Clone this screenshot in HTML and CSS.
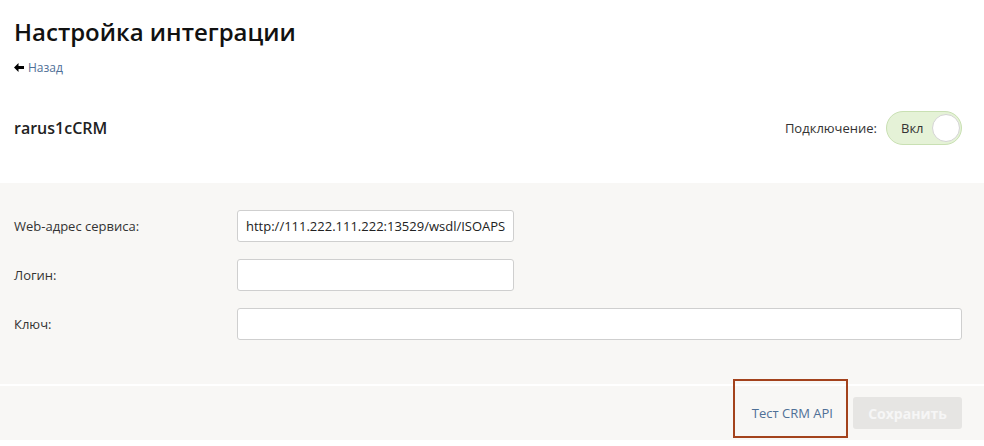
FILE: index.html
```html
<!DOCTYPE html>
<html lang="ru">
<head>
    <meta charset="UTF-8">
    <meta name="viewport" content="width=device-width, initial-scale=1.0">
    <title>Настройка интеграции</title>
    <link rel="stylesheet" href="styles.css">
</head>
<body>
    <div class="page-head">
        <h1>Настройка интеграции</h1>
        <a class="back" href="#">
            <svg class="back-arrow" width="10" height="9" viewBox="0 0 10 9"><path d="M0 4.5L4.5 0V3H10V6H4.5V9Z" fill="#000"/></svg>
            Назад
        </a>
    </div>

    <div class="integration">
        <div class="integration-name">rarus1cCRM</div>
        <div class="connection">
            <span>Подключение:</span>
            <div class="toggle">
                <span class="toggle-label">Вкл</span>
                <span class="toggle-knob"></span>
            </div>
        </div>
    </div>

    <div class="settings">
        <div class="fields">
            <div class="field">
                <label for="url">Web-адрес сервиса:</label>
                <input type="text" id="url" class="short" value="http://111.222.111.222:13529/wsdl/ISOAPService">
            </div>
            <div class="field">
                <label for="login">Логин:</label>
                <input type="text" id="login" class="short">
            </div>
            <div class="field">
                <label for="key">Ключ:</label>
                <input type="text" id="key">
            </div>
        </div>

        <div class="actions">
            <button class="link-btn">Тест CRM API</button>
            <button class="save-btn" disabled>Сохранить</button>
            <div class="highlight"></div>
        </div>
    </div>
</body>
</html>
```

FILE: styles.css
```css
body {
    margin: 0;
    font-family: "Open Sans", Arial, sans-serif;
    color: #222;
    background-color: white;
}
.page-head {
    padding: 14px 14px 0;
}
h1 {
    margin: 0;
    font-size: 24px;
    font-weight: 600;
    line-height: 36px;
    color: #111;
}
.back {
    display: inline-flex;
    align-items: center;
    margin-top: 9px;
    font-size: 12px;
    color: #4f7097;
    text-decoration: none;
}
.back-arrow {
    margin-right: 4px;
}
.integration {
    display: flex;
    align-items: center;
    justify-content: space-between;
    height: 34px;
    padding: 0 22px 0 14px;
    margin-top: 34px;
    margin-bottom: 38px;
}
.integration-name {
    font-size: 16px;
    font-weight: 600;
    color: #222;
}
.connection {
    display: flex;
    align-items: center;
    gap: 9px;
    font-size: 13px;
    color: #333;
}
.toggle {
    display: flex;
    align-items: center;
    justify-content: space-between;
    box-sizing: border-box;
    width: 76px;
    height: 34px;
    padding: 0 1px 0 14px;
    border: 1px solid #c9e0b3;
    border-radius: 17px;
    background-color: #e5f2d7;
}
.toggle-label {
    font-size: 13px;
    color: #333;
}
.toggle-knob {
    width: 28px;
    height: 28px;
    box-sizing: border-box;
    border: 1px solid #d4d4d4;
    border-radius: 50%;
    background-color: white;
}
.settings {
    background-color: #f8f7f5;
}
.fields {
    padding: 27px 22px 27px 14px;
    border-bottom: 2px solid white;
}
.field {
    display: flex;
    align-items: center;
    margin-bottom: 17px;
}
label {
    width: 223px;
    flex-shrink: 0;
    font-size: 13px;
    color: #333;
}
input {
    box-sizing: border-box;
    flex: 1;
    height: 32px;
    padding: 0 8px;
    border: 1px solid #cfcfcf;
    border-radius: 3px;
    background-color: white;
    font-family: "Open Sans", Arial, sans-serif;
    font-size: 13px;
    color: #222;
}
input.short {
    flex: none;
    width: 277px;
}
.actions {
    position: relative;
    display: flex;
    justify-content: flex-end;
    align-items: center;
    gap: 5px;
    padding: 11px 22px 11px 0;
}
.link-btn {
    border: none;
    background: none;
    padding: 0 15px 0 19px;
    height: 32px;
    font-family: "Open Sans", Arial, sans-serif;
    font-size: 13px;
    color: #4f7097;
    cursor: pointer;
}
.save-btn {
    width: 109px;
    height: 32px;
    border: none;
    border-radius: 3px;
    background-color: #e6e5e3;
    font-family: "Open Sans", Arial, sans-serif;
    font-size: 14px;
    font-weight: 700;
    color: #f6f6f6;
}
.highlight {
    position: absolute;
    right: 136px;
    top: -7px;
    width: 115px;
    height: 59px;
    box-sizing: border-box;
    border: 2px solid #a3421c;
}
```
